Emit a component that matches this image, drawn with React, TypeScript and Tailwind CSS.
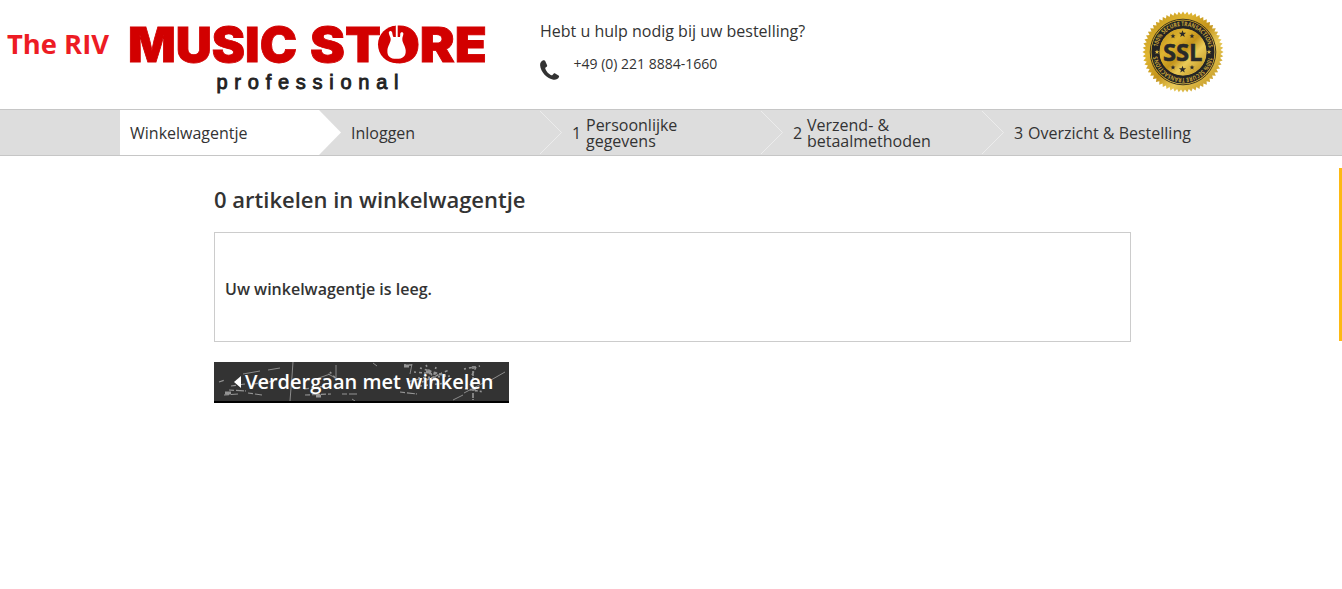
import React from "react";

const ring = (n: number) => Array.from({ length: n }, (_, i) => i);

const teeth = (() => {
  const pts: string[] = [];
  const n = 60;
  for (let i = 0; i < n * 2; i++) {
    const r = i % 2 ? 37.5 : 40.5;
    const a = (i * Math.PI) / n;
    pts.push(`${(41 + r * Math.cos(a)).toFixed(2)},${(41 + r * Math.sin(a)).toFixed(2)}`);
  }
  return pts.join(" ");
})();

function star(cx: number, cy: number, r: number) {
  return ring(10)
    .map((i) => {
      const k = i % 2 ? r * 0.42 : r;
      const a = (i * Math.PI) / 5 - Math.PI / 2;
      return `${(cx + k * Math.cos(a)).toFixed(2)},${(cy + k * Math.sin(a)).toFixed(2)}`;
    })
    .join(" ");
}

function Logo() {
  return (
    <svg className="block overflow-visible" width="372" height="74" viewBox="122 22 372 74">
      <g fill="#d20000" stroke="#d20000" strokeWidth="0.8" fontFamily="Inter" fontWeight="900" fontSize="48.5">
        <text x="128" y="62" textLength="169" lengthAdjust="spacingAndGlyphs">MUSIC</text>
        <text x="310" y="62" textLength="177" lengthAdjust="spacingAndGlyphs">STORE</text>
      </g>
      <ellipse cx="396.5" cy="44.5" rx="18.5" ry="18.8" fill="#d20000" />
      <path
        d="M395.800 25h1.900v12h2.300c.6-1.800-.4-3.200.9-4.400 1-.9 2.600-.3 2.500 1.100-.1 2-1 3.200-1.100 5.200-.1 3.800 3.100 6.800 3.400 11.300.4 6.200-3 8.600-9.200 8.600s-9.500-2.400-9.100-8.600c.3-4.500 3.400-7.500 3.300-11.300 0-2-1.900-4-1.900-6.200 0-1.400 1.400-2.200 2.500-1.500 1.600 1 .7 3.600 2.100 5.800h2.400z"
        fill="#fff"
      />
      <text x="216.500" y="88.500" fontFamily="Liberation Sans" fontSize="20" fill="#222" stroke="#222" strokeWidth=".9" textLength="182">professional</text>
    </svg>
  );
}

function Seal() {
  return (
    <svg className="block" width="82" height="82" viewBox="0 0 82 82">
      <defs>
        <linearGradient id="gold" x1="0" y1="0" x2="1" y2="1">
          <stop offset="0" stopColor="#b98a14" />
          <stop offset=".3" stopColor="#dfb531" />
          <stop offset=".5" stopColor="#c3931b" />
          <stop offset=".65" stopColor="#e9ca58" />
          <stop offset="1" stopColor="#b6850f" />
        </linearGradient>
        <path id="upper" d="M15 41a26 26 0 0 1 52 0" />
        <path id="lower" d="M67 41a26 26 0 0 1-52 0" />
      </defs>
      <polygon points={teeth} fill="url(#gold)" />
      <circle cx="41" cy="41" r="32.800" fill="none" stroke="#40371d" strokeWidth="1" />
      <circle cx="41" cy="41" r="27.500" fill="none" stroke="#242424" strokeWidth="8" />
      <circle cx="41" cy="41" r="23.300" fill="url(#gold)" />
      <g fontFamily="Open Sans" fontSize="6.200" fontWeight="700" fill="#c9a43a">
        <text><textPath href="#upper" startOffset="5" textLength="72" lengthAdjust="spacingAndGlyphs">100% SECURE TRANSACTIONS</textPath></text>
        <text><textPath href="#lower" startOffset="5" textLength="72" lengthAdjust="spacingAndGlyphs">100% SECURE TRANSACTIONS</textPath></text>
      </g>
      <g fill="#2a2a2a">
        <polygon points={star(40.5, 23, 3.8)} />
        <polygon points={star(31, 25.2, 2.6)} />
        <polygon points={star(50, 25.2, 2.6)} />
        <polygon points={star(40.5, 58.5, 3.8)} />
        <polygon points={star(31, 56.5, 2.6)} />
        <polygon points={star(50, 56.5, 2.6)} />
      </g>
      <polygon points={star(15, 41, 2.5)} fill="#e5bf45" />
      <polygon points={star(67, 41, 2.5)} fill="#e5bf45" />
      <text x="21" y="49.500" fontFamily="Open Sans" fontSize="23.500" fontWeight="700" fill="#292929" stroke="#292929" strokeWidth=".5" textLength="39.500" lengthAdjust="spacingAndGlyphs">SSL</text>
    </svg>
  );
}

const steps = [
  { num: "", label: "Winkelwagentje" },
  { num: "", label: "Inloggen" },
  { num: "1", label: "Persoonlijke gegevens" },
  { num: "2", label: "Verzend- & betaalmethoden" },
  { num: "3", label: "Overzicht & Bestelling" },
];

function Step({ num, label, index }: { num: string; label: string; index: number }) {
  const two = index === 2 || index === 3;
  return (
    <li className={`flex h-[45px] items-center ${index === 4 ? "w-[218px]" : "w-[221px]"}`}>
      <div className={`flex h-full min-w-0 flex-1 items-center pl-2.5 ${index === 0 ? "bg-white" : ""}`}>
        {num && <span className="w-[14px] shrink-0">{num}</span>}
        <span className={two ? "w-[130px] leading-4" : "whitespace-nowrap"}>{label}</span>
      </div>
      {index < 4 && (
        <svg className="shrink-0" width="22" height="45" viewBox="0 0 22 45">
          {index === 0 ? (
            <path d="M0 0L22 22.500L0 45z" fill="#fff" />
          ) : (
            <path d="M0 1L21.500 22.500L0 44" fill="none" stroke="#ececec" />
          )}
        </svg>
      )}
    </li>
  );
}

function Scratches() {
  return (
    <svg className="absolute inset-0" width="295" height="39" viewBox="0 0 295 39" fill="none" stroke="#959595">
      <path d="M79 0l-1 14-1 12-1 13M122 3v13l-8-4M102 17l14-5M54 8l12-2M29 12l17-3M198 2l-2 10M239 38l10-5M250 31l21-11M277 18l14-8M159 1l4 3M138 37l3 2" strokeWidth=".9" />
      <path d="M259 4v34M262 5l-4 8M256 22l6 7" strokeWidth="1.600" strokeDasharray="3 2 5 1" />
      <path d="M5 20l6-2M17 24l14-2M15 28l17 1M10 33l14-1M34 31l14 2M91 33l26-1M90 27l22-3M128 32h16M39 22l22-3M186 30l17 2M193 20l12-3" strokeWidth="1.200" strokeDasharray="5 2 8 1" />
      <path d="M200 10l32 3M204 16l33-2M206 6l23 7M208 20l27-12M212 3l9 16M222 5l-5 18M190 3h8M250 7l16-3M246 26l24 4M116 10l6 7M206 24l26-3" strokeWidth="1.600" strokeDasharray="2 3 3 2" />
      <path d="M190 4h5M11 31h6M102 34h5M212 10h5" strokeWidth="3" />
    </svg>
  );
}

export default function App() {
  return (
    <div className="h-[589px] overflow-hidden bg-white font-['Open_Sans',sans-serif] text-base text-[#333]">
      <header className="flex h-[109px] items-start">
        <div className="w-[122px] shrink-0 pt-[24px]">
          <svg className="block overflow-visible" width="122" height="40" viewBox="0 0 122 40">
            <text x="7" y="30" fontFamily="Open Sans" fontSize="27.500" fontWeight="700" fill="#ed1c24" textLength="102" lengthAdjust="spacingAndGlyphs">The RIV</text>
          </svg>
        </div>
        <div className="w-[418px] shrink-0 pt-[22px]">
          <Logo />
        </div>
        <div className="w-[602px] shrink-0 pt-[19px]">
          <p className="leading-6">Hebt u hulp nodig bij uw bestelling?</p>
          <div className="flex pt-[11px]">
            <svg className="mt-[6px] shrink-0" width="20" height="20" viewBox="0 0 20 20">
              <path d="M3.300.3C1.100 1 0 3 .1 5.300c.5 6.700 7 13.500 13.400 14.400 2.400.3 4.600-.6 5.500-2.600.3-.7.100-1.200-.5-1.600l-3.300-2c-.6-.3-1.200-.2-1.600.3l-1.100 1.200c-.5.4-1.100.3-1.800-.1-2.400-1.400-4.300-3.500-5.300-6-.3-.7-.1-1.200.5-1.600l.8-.5c.5-.4.6-.9.4-1.500L5.200 1C4.800.2 4.200 0 3.300.3z" fill="#333" />
            </svg>
            <span className="pl-[13.500px] text-sm leading-5">+49 (0) 221 8884-1660</span>
          </div>
        </div>
        <div className="pt-[10.500px]">
          <Seal />
        </div>
      </header>
      <nav className="border-y border-[#c6c6c6] bg-[#ddd] pl-[120px]">
        <ol className="flex">
          {steps.map((s, i) => (
            <Step key={s.label} num={s.num} label={s.label} index={i} />
          ))}
        </ol>
      </nav>
      <div className="flex justify-between">
        <main className="ml-[214px] w-[917px] pt-[27px]">
          <h1 className="text-[22px] leading-8 font-semibold">0 artikelen in winkelwagentje</h1>
          <section className="mt-[17px] flex h-[110px] items-center border border-[#ccc] pt-[3px] pl-2.5 font-semibold">
            Uw winkelwagentje is leeg.
          </section>
          <button className="relative mt-5 flex h-[41px] w-[295px] items-center border-b-2 border-black bg-[#333] pl-5 text-xl font-semibold text-white">
            <Scratches />
            <svg className="relative shrink-0" width="11" height="12" viewBox="0 0 11 12">
              <path d="M7 0v12L0 6z" fill="#fff" />
            </svg>
            <span className="relative whitespace-nowrap">Verdergaan met winkelen</span>
          </button>
        </main>
        <aside className="mt-3 h-[173px] w-[3px] bg-[#fdb913]" />
      </div>
    </div>
  );
}
